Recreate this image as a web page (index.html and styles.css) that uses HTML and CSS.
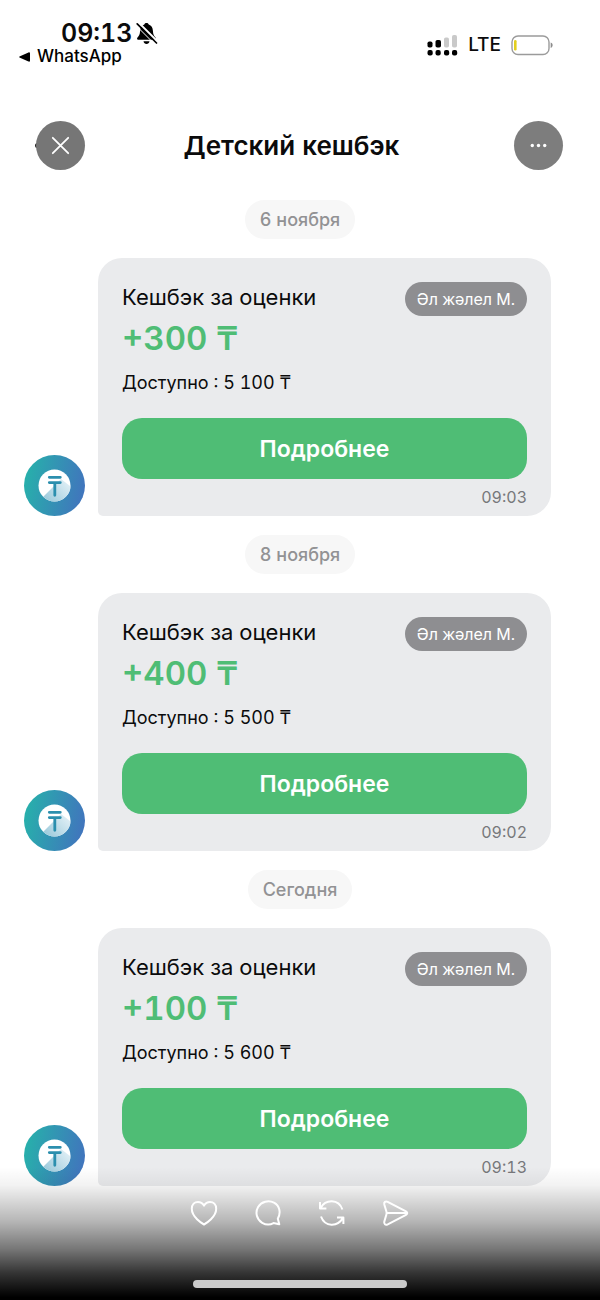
FILE: index.html
```html
<!DOCTYPE html>
<html lang="ru">
<head>
<meta charset="utf-8">
<meta name="viewport" content="width=device-width, initial-scale=1">
<title>Детский кешбэк</title>
<link rel="stylesheet" href="styles.css">
</head>
<body>
<svg class="defs" width="0" height="0" aria-hidden="true">
  <defs>
    <linearGradient id="ring" x1="0" y1="0.4" x2="1" y2="0.6"><stop offset="0" stop-color="#27b0ab"/><stop offset="1" stop-color="#4174bd"/></linearGradient>
    <linearGradient id="shade" x1="0" y1="1" x2="1" y2="0.2"><stop offset="0" stop-color="#8fc3d6"/><stop offset="1" stop-color="#e6f2f8"/></linearGradient>
    <clipPath id="coin"><circle cx="30.500" cy="30.500" r="16"/></clipPath>
    <symbol id="tenge" viewBox="0 0 61 61">
      <circle cx="30.500" cy="30.500" r="30.500" fill="url(#ring)"/>
      <circle cx="30.500" cy="30.500" r="16" fill="#fff"/>
      <path d="M18 43 L37 24 L50 34 V50 H22 Z" fill="url(#shade)" clip-path="url(#coin)"/>
      <path d="M25.300 22.300H36.300M25.300 27.600H36.300M30.800 27.600V40.300" fill="none" stroke="#2b8fae" stroke-width="2.800" stroke-linecap="round"/>
    </symbol>
  </defs>
</svg>

<div class="status">
  <div class="status-left">
    <div class="clock">
      <span>09:13</span>
      <svg width="22" height="23" viewBox="0 0 22 23" aria-hidden="true">
        <path d="M10.500 1C11.800 1 12.500 1.700 12.700 2.600C15.500 3.500 16.700 5.800 16.900 8.800C17.100 12.500 18 14 19.500 15.600C20.300 16.600 20 17.800 18.800 17.800H2.200C1 17.800 .7 16.600 1.500 15.600C3 14 3.900 12.500 4.100 8.800C4.300 5.800 5.500 3.500 8.300 2.600C8.500 1.700 9.200 1 10.500 1Z"/>
        <path d="M7.500 19.200H13.500C13.200 21 12 22 10.500 22S7.800 21 7.500 19.200Z"/>
        <path d="M2.500 .5L22 20" stroke="#fff" stroke-width="2"/>
        <path d="M1.200 1.800L20.500 21" stroke="#000" stroke-width="1.700" stroke-linecap="round"/>
        <path d="M0 3.500L18.500 22" stroke="#fff" stroke-width="1"/>
      </svg>
    </div>
    <a class="back-app" href="#">
      <svg width="11" height="10" viewBox="0 0 11 10" aria-hidden="true"><path d="M1 4.200L9.500 .4C10.300 0 11 .4 11 1.200V8.800C11 9.600 10.300 10 9.500 9.600L1 5.800C0 5.400 0 4.600 1 4.200Z"/></svg>
      <span>WhatsApp</span>
    </a>
  </div>
  <div class="status-right">
    <svg width="31" height="22" viewBox="0 0 31 22" aria-hidden="true">
      <g fill="#c9c9c9"><rect x="17" y="3.500" width="5" height="10" rx="1.800"/><rect x="25" y="1" width="5" height="12.500" rx="1.800"/></g>
      <rect x="0.500" y="7.500" width="5" height="6" rx="1.800"/><rect x="8.500" y="6" width="5.500" height="7.500" rx="1.800"/>
      <rect x="0.500" y="16" width="5.200" height="5.500" rx="2"/><rect x="8.500" y="16" width="5.200" height="5.500" rx="2"/><rect x="17" y="16" width="5.200" height="5.500" rx="2"/><rect x="25" y="16" width="5.200" height="5.500" rx="2"/>
    </svg>
    <span class="network">LTE</span>
    <svg width="42" height="21" viewBox="0 0 42 21" aria-hidden="true">
      <rect x="1" y="1" width="37" height="18.500" rx="6" fill="none" stroke="#9b9b9b" stroke-width="1.400"/>
      <rect x="3" y="5" width="2.600" height="10.500" rx="1.300" fill="#e3cf1d"/>
      <path d="M39.700 7.600C42.300 8.500 42.300 12 39.700 13Z" fill="#8c8c8c"/>
    </svg>
  </div>
</div>

<header class="header">
  <button class="round round-close" type="button" aria-label="Закрыть">
    <svg width="49" height="49" viewBox="0 0 49 49" aria-hidden="true"><path d="M16.800 16.800L32.200 32.200M32.200 16.800L16.800 32.200" stroke="#fff" stroke-width="1.800" stroke-linecap="round"/></svg>
  </button>
  <h1>Детский кешбэк</h1>
  <button class="round" type="button" aria-label="Ещё">
    <svg width="49" height="49" viewBox="0 0 49 49" fill="#fff" aria-hidden="true"><circle cx="18.300" cy="24.500" r="1.700"/><circle cx="24.500" cy="24.500" r="1.700"/><circle cx="30.700" cy="24.500" r="1.700"/></svg>
  </button>
</header>

<main class="chat">
  <p class="date">6 ноября</p>
  <article class="message">
    <svg class="avatar" aria-hidden="true"><use href="#tenge"/></svg>
    <div class="card">
      <div class="card-top"><h2>Кешбэк за оценки</h2><span class="tag">Әл жәлел М.</span></div>
      <p class="amount">+300 ₸</p>
      <p class="available">Доступно : 5 100 ₸</p>
      <button class="more" type="button">Подробнее</button>
      <time>09:03</time>
    </div>
  </article>
  <p class="date">8 ноября</p>
  <article class="message">
    <svg class="avatar" aria-hidden="true"><use href="#tenge"/></svg>
    <div class="card">
      <div class="card-top"><h2>Кешбэк за оценки</h2><span class="tag">Әл жәлел М.</span></div>
      <p class="amount">+400 ₸</p>
      <p class="available">Доступно : 5 500 ₸</p>
      <button class="more" type="button">Подробнее</button>
      <time>09:02</time>
    </div>
  </article>
  <p class="date">Сегодня</p>
  <article class="message">
    <svg class="avatar" aria-hidden="true"><use href="#tenge"/></svg>
    <div class="card">
      <div class="card-top"><h2>Кешбэк за оценки</h2><span class="tag">Әл жәлел М.</span></div>
      <p class="amount">+100 ₸</p>
      <p class="available">Доступно : 5 600 ₸</p>
      <button class="more" type="button">Подробнее</button>
      <time>09:13</time>
    </div>
  </article>
</main>

<footer class="overlay">
  <div class="actions">
    <button type="button" aria-label="Нравится"><svg viewBox="0 0 28 28" aria-hidden="true"><path d="M14 25.500C11.800 24.300 1.800 18 1.800 9.800C1.800 5.500 4.600 2.900 8 2.900C10.600 2.900 12.600 4.200 14 6.600C15.400 4.200 17.400 2.900 20 2.900C23.400 2.900 26.200 5.500 26.200 9.800C26.200 18 16.200 24.300 14 25.500Z"/></svg></button>
    <button type="button" aria-label="Комментировать"><svg viewBox="0 0 28 28" aria-hidden="true"><path d="M23.800 19.800C27.300 13.500 25.500 6.600 20 3.700C14.500 .8 7.400 2.600 4.100 8C.9 13.500 2.700 20.600 8.200 23.800C11.900 25.900 16.100 25.900 19.500 24.100L25.300 25.200L23.800 19.800Z"/></svg></button>
    <button type="button" aria-label="Репост"><svg viewBox="0 0 28 28" aria-hidden="true"><path d="M2 3V9.400H8.400M2.600 9C7.500 .2 20.500 -.4 24.400 10.500M25.400 25V18.600H19M24.800 19C19.900 27.800 6.900 28.400 3 17.500"/></svg></button>
    <button type="button" aria-label="Отправить"><svg viewBox="0 0 28 28" aria-hidden="true"><path d="M5.700 2.800L24 12.300C25.700 13.200 25.700 14.900 24 15.800L5.700 25.300C3.400 26.400 1.700 24.900 2.300 22.600L4.400 15.500C4.700 14.500 4.700 13.500 4.400 12.500L2.300 5.500C1.700 3.200 3.400 1.700 5.700 2.800ZM5 14H25"/></svg></button>
  </div>
  <div class="home-bar"></div>
</footer>
</body>
</html>
```
FILE: styles.css
```css
* { box-sizing: border-box; }

body {
  position: relative;
  min-height: 100vh;
  margin: 0;
  overflow-x: hidden;
  background: #fff;
  color: #0b0b0c;
  font-family: Inter, "Noto Sans", "Liberation Sans", sans-serif;
  font-variant-numeric: tabular-nums;
}

h1, h2, p { margin: 0; font-weight: 400; }

button {
  padding: 0;
  border: 0;
  background: none;
  color: inherit;
  font: inherit;
  cursor: pointer;
}

svg { display: block; flex: none; }

.defs { position: absolute; }

.status {
  display: flex;
  justify-content: space-between;
  height: 121px;
  padding: 19px 47px 0 19px;
}

.clock {
  display: flex;
  align-items: center;
  gap: 4px;
  padding-left: 42px;
  font-size: 25px;
  font-weight: 600;
  line-height: 28px;
}

.back-app {
  display: flex;
  align-items: center;
  gap: 7px;
  color: #000;
  font-size: 17px;
  font-weight: 500;
  line-height: 19px;
  text-decoration: none;
}

.status-right {
  display: flex;
  align-items: center;
  height: 52px;
  gap: 10px;
}

.network { font-size: 19px; font-weight: 500; line-height: 24px; }

.header {
  display: flex;
  align-items: center;
  justify-content: space-between;
  padding: 0 37px 0 36px;
}

.header h1 {
  margin-right: 16px;
  font-size: 26px;
  font-weight: 600;
  line-height: 32px;
}

.round {
  position: relative;
  width: 49px;
  height: 49px;
  border-radius: 50%;
  background: #7d7d7d;
}

.round-close { background: #767676; }

.round-close::before {
  content: "";
  position: absolute;
  z-index: -1;
  top: 22px;
  left: -1px;
  width: 5px;
  height: 5px;
  border-radius: 50%;
  background: #222;
}

.chat {
  display: flex;
  flex-direction: column;
  gap: 19px;
  padding: 30px 49px 114px 24px;
}

.date {
  align-self: center;
  margin-left: 25px;
  padding: 0 15px;
  border-radius: 20px;
  background: #f7f7f7;
  color: #929294;
  font-size: 18px;
  font-weight: 500;
  line-height: 39px;
}

.message { display: flex; align-items: flex-end; gap: 13px; }

.avatar { width: 61px; height: 61px; }

.card {
  flex: 1;
  display: flex;
  flex-direction: column;
  padding: 24px 24px 8px;
  border-radius: 24px 24px 24px 5px;
  background: #eaebed;
}

.card-top { display: flex; justify-content: space-between; gap: 12px; }

.card h2 { font-size: 22px; line-height: 31px; }

.tag {
  padding: 0 12px;
  border-radius: 17px;
  background: #8e8e91;
  color: #fff;
  font-size: 16px;
  line-height: 34px;
}

.amount { color: #4fbd75; font-size: 33px; font-weight: 600; line-height: 44px; }

.available { margin-top: 7px; font-size: 18px; line-height: 32px; }

.more {
  height: 61px;
  margin-top: 19px;
  border-radius: 20px;
  background: #4fbd75;
  color: #fff;
  font-size: 23px;
  font-weight: 600;
}

.card time {
  align-self: flex-end;
  margin-top: 7px;
  color: #77787b;
  font-size: 16px;
  line-height: 22px;
}

.overlay {
  position: absolute;
  right: 0;
  bottom: 0;
  left: 0;
  display: flex;
  flex-direction: column;
  align-items: center;
  justify-content: space-between;
  height: 140px;
  padding: 39px 0 12px;
  background: linear-gradient(rgb(0 0 0 / 0) 5%, rgb(0 0 0 / 0.05) 18%, rgb(0 0 0 / 0.16) 30%, rgb(0 0 0 / 0.29) 44%, rgb(0 0 0 / 0.54) 64%, rgb(0 0 0 / 0.8) 81%, #000 98%);
}

.actions { display: flex; gap: 36px; padding-right: 1px; }

.actions svg {
  width: 28px;
  height: 28px;
  fill: none;
  stroke: #fff;
  stroke-width: 2;
  stroke-linejoin: round;
}

.home-bar { width: 214px; height: 8px; border-radius: 4px; background: #cbcbcb; }
```
